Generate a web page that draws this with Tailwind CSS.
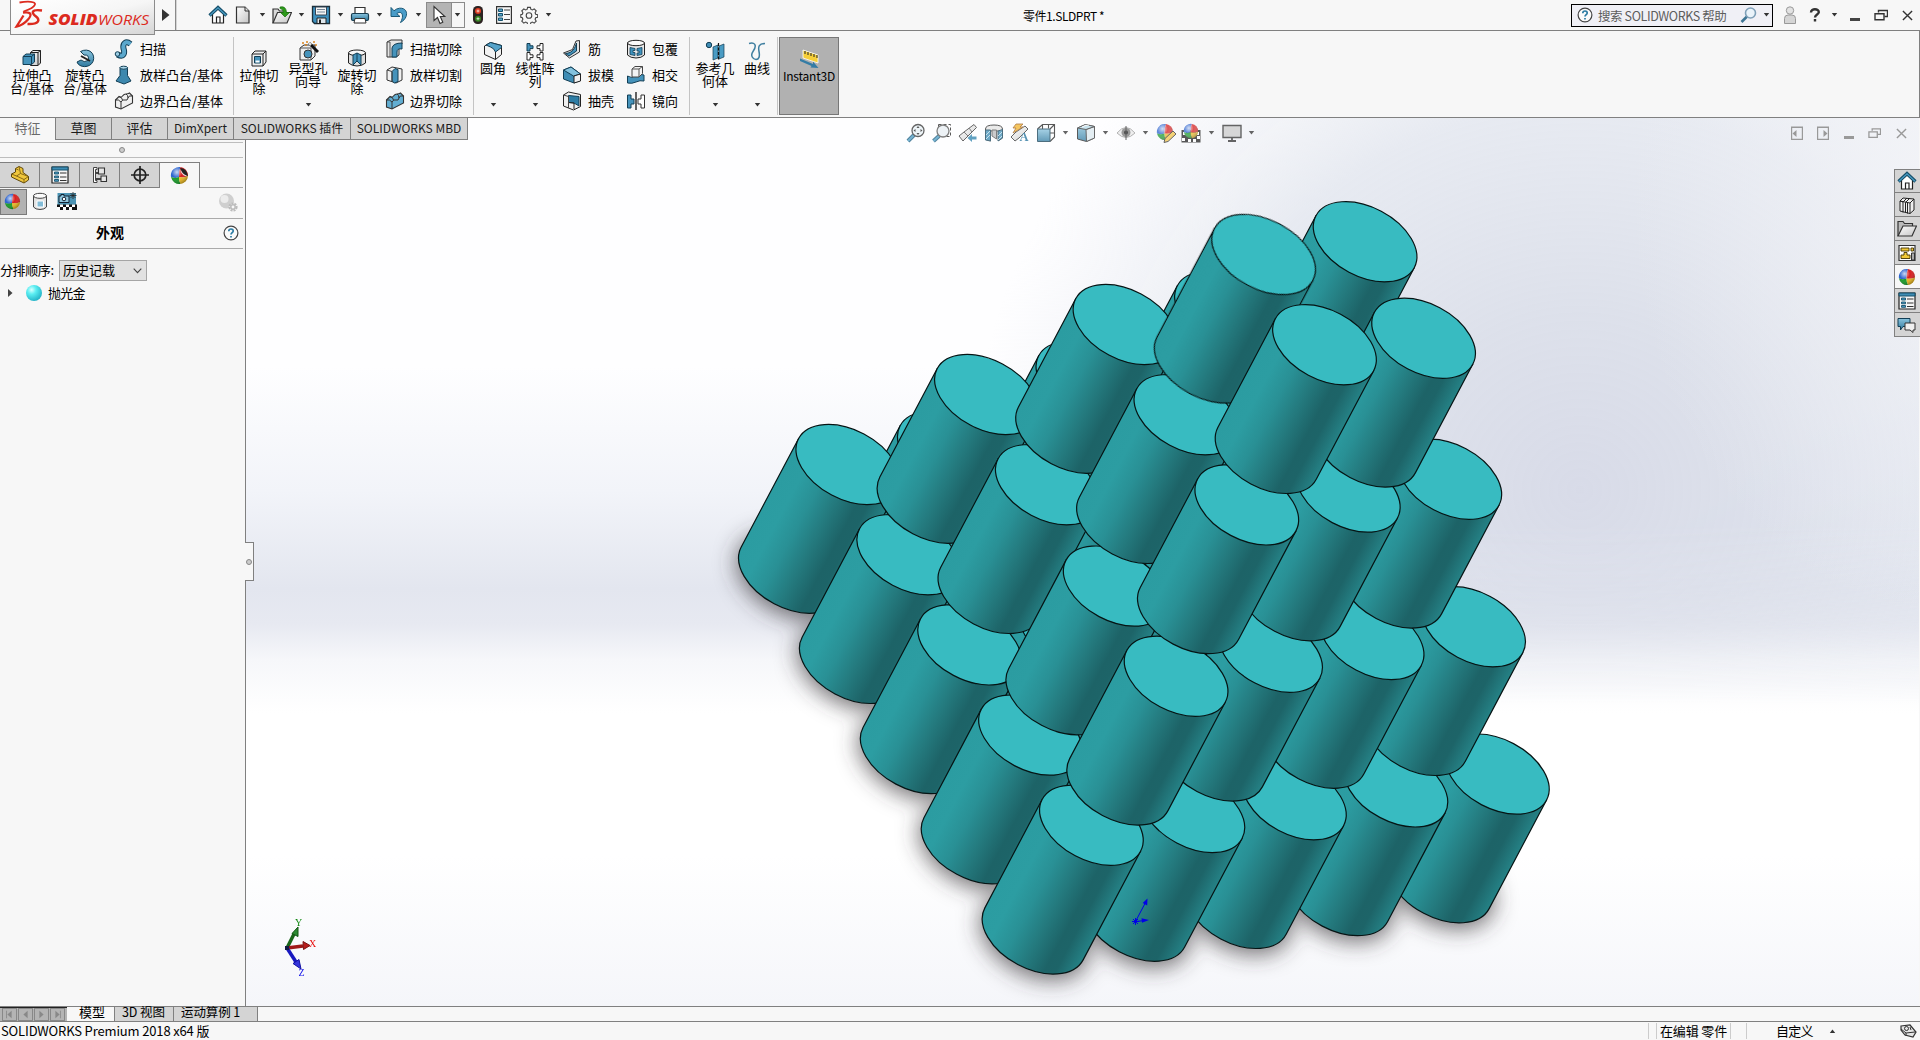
<!DOCTYPE html>
<html lang="zh-CN">
<head>
<meta charset="utf-8">
<title>零件1.SLDPRT *</title>
<script src="https://cdn.jsdelivr.net/npm/@tailwindcss/browser@4"></script>
</head>
<body class="bg-[#f7f7f7]">
<svg class="absolute w-0 h-0" aria-hidden="true">
<defs>
<linearGradient id="blue" x1="0" y1="0" x2="0" y2="1"><stop offset="0" stop-color="#8ac4de"/><stop offset="1" stop-color="#2f7aa0"/></linearGradient>
<linearGradient id="gray" x1="0" y1="0" x2="1" y2="1"><stop offset="0" stop-color="#fff"/><stop offset="1" stop-color="#c4c4c4"/></linearGradient>
<radialGradient id="shine" cx=".35" cy=".3" r=".75"><stop offset="0" stop-color="#fff" stop-opacity=".75"/><stop offset=".45" stop-color="#fff" stop-opacity="0"/><stop offset="1" stop-color="#000" stop-opacity=".35"/></radialGradient>
<radialGradient id="cyanball" cx=".35" cy=".3" r=".8"><stop offset="0" stop-color="#d8ffff"/><stop offset=".35" stop-color="#5beef2"/><stop offset="1" stop-color="#1ba9c0"/></radialGradient>
<symbol id="caret" viewBox="0 0 7 4"><path d="M.8 0H6.2L3.5 3.4Z" fill="#333"/></symbol>
<symbol id="house" viewBox="0 0 20 20"><path d="M4.500 9v9h11V9L10 4Z" fill="#fff" stroke="#222" stroke-width="1.200"/><path d="M8.500 18v-6h3.500v6" fill="none" stroke="#222" stroke-width="1.200"/><path d="M1.500 10.500 10 2.500l8.500 8" fill="none" stroke="#17506b" stroke-width="3.200"/><path d="M2 10.200 10 2.800l8 7.400" fill="none" stroke="#4a9cc4" stroke-width="1.200"/></symbol>
<symbol id="ball" viewBox="0 0 18 18"><path d="M10 1A8 8 0 0 0 1 10.500Q5 12 8.500 10.500Q8.200 5 10 1Z" fill="#2a62cf"/><path d="M10 1a8 8 0 0 1 7 8.500Q13 11.500 8.500 10.500Q8.200 5 10 1Z" fill="#d81e1e"/><path d="M1 10.500A8 8 0 0 0 10 17Q8.500 14 8.500 10.500 5 12 1 10.500Z" fill="#159a26"/><path d="M10 17a8 8 0 0 0 7-7.500Q13 11.500 8.500 10.500 8.500 14 10 17Z" fill="#edb91d"/><circle cx="9" cy="9" r="8" fill="url(#shine)"/></symbol>
<symbol id="help" viewBox="0 0 16 16"><circle cx="8" cy="8" r="6.900" fill="#fafafa" stroke="#444" stroke-width="1.200"/><path d="M5.800 6.300C5.800 3.200 10.300 3.400 10.200 6 10.200 7.600 8 7.700 8 9.600M8 10.900v1.600" fill="none" stroke="#2b7ba3" stroke-width="1.700"/></symbol>
<symbol id="restore" viewBox="0 0 14 12"><path d="M4.500 3.500V1.500h9v6h-3" fill="none" stroke="currentColor" stroke-width="1.400"/><path d="M1 4.700h9v6H1Z" fill="none" stroke="currentColor" stroke-width="1.400"/></symbol>
<symbol id="close" viewBox="0 0 12 12"><path d="m1 1 10 10M11 1 1 11" stroke="currentColor" stroke-width="1.500"/></symbol>
<symbol id="props" viewBox="0 0 18 18"><path d="M1 1h16v16H1Z" fill="#f6f6f6" stroke="#222" stroke-width="1.200"/><path d="M1 1h16v3H1Z" fill="#3f8db5" stroke="#17506b"/><path d="M3.500 6h4v2h-4ZM3.500 10h4v1.800h-4ZM3.500 13.500h4v1.800h-4Z" fill="#4a9cc4" stroke="#17506b" stroke-width=".9"/><path d="M9 7h6.500M9 11h6.500M9 14.500h6.500" stroke="#333"/></symbol>
<symbol id="wave" viewBox="0 0 20 18"><path d="M1.500 8 5 4.500q2 1.500 3.500-.5T12 2t3.500-1l3 3v7L7 17l-5.500-2Z" stroke="#333" stroke-width="1.100"/><path d="M1.500 8q3-1 5.500 2 1.500-3 4-2t3-2 4.500-2M7 10v7M5 4.500Q8 5 8.500 8M12 2q2 1 2 4" fill="none" stroke="#333"/></symbol>
</defs>
</svg>

<div class="relative h-[1040px] w-[1920px] overflow-hidden bg-[#f7f7f7] font-['Noto_Sans_CJK_SC',sans-serif] text-[13px] leading-[13px] whitespace-nowrap text-black">
<!-- title bar -->
<header class="relative z-10 flex h-[31px] w-full items-center border-b border-[#808080]">
  <div class="ml-[10px] h-[35px] w-[145px] self-start border border-t-0 border-[#8c8c8c] bg-linear-to-br from-white via-[#f6f6f6] to-[#d5d5d5]">
    <svg class="h-[34px] w-[143px]" viewBox="0 0 143 34">
      <g fill="none" stroke="#dc2a1e"><path d="M8.500 2.500C17 1 25 1.500 24 4.500 23 7.500 17 10 12.500 11.500" stroke-width="1.800"/><path d="M12 12.500C20 11.500 21.500 14.500 17 19.500 13.500 23.500 9.500 26 5.500 26.500L12.500 15.500" stroke-width="2.300"/><path d="M31 10.500C19.500 9 20.500 13 25 16.500c4.500 3.500 3 8-8.500 7.500" stroke-width="2.500"/></g>
      <g fill="#dc2a1e" font-family="Open Sans" font-style="italic" font-size="15"><text x="37.500" y="24.500" font-weight="800" textLength="49" lengthAdjust="spacingAndGlyphs">SOLID</text><text x="87" y="24.500" textLength="51" lengthAdjust="spacingAndGlyphs">WORKS</text></g>
    </svg>
  </div>
  <svg class="ml-[7px] h-3 w-2" viewBox="0 0 8 12"><path d="M0 0 7.500 6 0 12Z" fill="#333"/></svg>
  <div class="ml-[5px] h-full w-[2px] border-l border-[#8a8a8a] bg-[#d4d4d4]"></div>
  <svg class="ml-[31px] size-5"><use href="#house"/></svg>
  <svg class="ml-[6px] h-5 w-[18px]" viewBox="0 0 18 20"><path d="M2.500 2h8.500l4 4v12h-12.500Z" fill="url(#gray)" stroke="#333" stroke-width="1.200"/><path d="M11 2v4h4" fill="#ddd" stroke="#333"/></svg>
  <svg class="ml-[7px] h-1 w-[7px]"><use href="#caret"/></svg>
  <svg class="ml-[6px] size-5" viewBox="0 0 20 20"><path d="M1 18V4h5l1.500 2H13v3" fill="#d8d8d8" stroke="#333" stroke-width="1.200"/><path d="M1 18 5.500 7.500H19.500L15 18Z" fill="url(#gray)" stroke="#333" stroke-width="1.200"/><path d="M8 2q6-1.500 6.500 5.500h3L13 12 8.500 7.500h2.800Q11.500 4 8 3.500Z" fill="#2d9a1b" stroke="#1a6d0d" stroke-width=".7"/></svg>
  <svg class="ml-[6px] h-1 w-[7px]"><use href="#caret"/></svg>
  <svg class="ml-[6px] size-5" viewBox="0 0 20 20"><path d="M1.500 1.500h17v17H3.500l-2-2Z" fill="#3d8fbd" stroke="#1c2f3a" stroke-width="1.300"/><path d="M4.500 2h11v8h-11Z" fill="#f5f5f5" stroke="#345"/><path d="M6 4.500h8M6 7h8" stroke="#789"/><path d="M6 13h9v5.500H6Z" fill="#dfe8ee" stroke="#222"/><path d="M8 14.500h2v4H8Z" fill="#222"/></svg>
  <svg class="ml-[6px] h-1 w-[7px]"><use href="#caret"/></svg>
  <svg class="ml-[6px] size-5" viewBox="0 0 20 20"><path d="M5 9V2.500h10V9" fill="#fff" stroke="#333" stroke-width="1.200"/><rect x="1.500" y="8.500" width="17" height="7" rx="1.500" fill="url(#blue)" stroke="#173e52" stroke-width="1.200"/><path d="M5 13.500h10l1 4.500H4Z" fill="#fff" stroke="#333"/></svg>
  <svg class="ml-[6px] h-1 w-[7px]"><use href="#caret"/></svg>
  <svg class="ml-[6px] size-5" viewBox="0 0 20 20"><path d="M2 2.500v9h9L7.800 8.700C12 5 16 9.500 11.500 17.500 20 13 19.500 2.500 10.500 3.200Q7.500 3.500 5 5.800Z" fill="#4a9cc8" stroke="#1b5876" stroke-width="1"/></svg>
  <svg class="ml-[6px] h-1 w-[7px]"><use href="#caret"/></svg>
  <div class="ml-[4px] flex h-[26px] w-[39px] items-center border border-[#8b8b8b]">
    <div class="flex h-full w-[25px] items-center justify-center border-r border-[#8b8b8b] bg-[#b4b4b4]"><svg class="h-5 w-4" viewBox="0 0 16 20"><path d="M3 1.500v14l3.500-3 2.500 6 2.800-1.200L9.300 11.500h4.500Z" fill="#fff" stroke="#333" stroke-width="1.100"/></svg></div>
    <svg class="ml-[2px] h-1 w-[7px]"><use href="#caret"/></svg>
  </div>
  <svg class="ml-[8px] h-[18px] w-[10px]" viewBox="0 0 10 18"><rect width="10" height="18" rx="4.500" fill="#2c2322"/><circle cx="5" cy="5" r="3" fill="#df3c22"/><circle cx="5" cy="12.700" r="3" fill="#368522"/><path d="M5 3.500v3M3.500 5h3M5 11.200v3M3.500 12.700h3" stroke="#fff" stroke-width=".7"/></svg>
  <svg class="ml-[13px] h-[18px] w-4" viewBox="0 0 16 18"><path d="M.6.600h14.800v16.800H.6Z" fill="#f8f8f8" stroke="#333" stroke-width="1.200"/><path d="M2.500 3h4v2.500h-4ZM2.500 7.500h4V10h-4ZM2.500 12h4v2.500h-4Z" fill="#56a5cc" stroke="#17506b"/><path d="M8 4h6M8 8.500h6M8 13.500h6" stroke="#444"/></svg>
  <svg class="ml-[8px] size-[18px]" viewBox="0 0 18 18"><path d="m7.600 1.400h2.800l.5 2 1.500.6 1.800-1.100 2 2-1.100 1.800.6 1.500 2 .5v2.600l-2 .5-.6 1.500 1.100 1.800-2 2-1.800-1.100-1.500.6-.5 2H7.600l-.5-2-1.500-.6-1.800 1.100-2-2 1.100-1.800-.6-1.500-1.500-.5V8.700l1.500-.5.600-1.500-1.100-1.800 2-2 1.800 1.100 1.500-.6Z" fill="#f8f8f8" stroke="#444" stroke-width="1.100"/><circle cx="9" cy="9.500" r="2.800" fill="none" stroke="#444" stroke-width="1.100"/></svg>
  <svg class="ml-[7px] h-1 w-[7px]"><use href="#caret"/></svg>
  <div class="ml-[471px] w-[90px] text-[12px] tracking-[-0.450px]">零件1.SLDPRT *</div>
  <div class="ml-auto flex h-[23px] w-[202px] items-center border border-black bg-[#f0f0f6]">
    <svg class="ml-[5px] size-4"><use href="#help"/></svg>
    <span class="ml-[5px] w-[132px] text-[12.500px] tracking-[-0.400px] text-[#5d5d5d]">搜索 SOLIDWORKS 帮助</span>
    <svg class="ml-[10px] h-4 w-[17px]" viewBox="0 0 17 16"><path d="M7 9.500 1.500 15" stroke="#3e7594" stroke-width="2.600"/><circle cx="10.500" cy="6" r="5" fill="#eaf3fa" stroke="#7fa0b8" stroke-width="1.600"/></svg>
    <svg class="ml-[6px] h-1 w-[7px]"><use href="#caret"/></svg>
  </div>
  <svg class="ml-[10px] h-[18px] w-[14px]" viewBox="0 0 14 18"><circle cx="7" cy="4.500" r="3.700" fill="#e2e2e2" stroke="#999"/><path d="M1.500 17.500v-5q0-3.500 3.500-3.500h4q3.500 0 3.500 3.500v5Z" fill="#d5d5d5" stroke="#999"/></svg>
  <svg class="ml-[12px] h-[14px] w-3" viewBox="0 0 12 14"><path d="M2 4.500C2 0 10 .5 9.800 4.200 9.700 6.500 6 6.500 6 9.500M6 11v2.500" fill="none" stroke="#333" stroke-width="2.400"/></svg>
  <svg class="ml-[10px] h-1 w-[7px]"><use href="#caret"/></svg>
  <div class="mt-[9px] ml-[12px] h-[3px] w-[10px] bg-[#444]"></div>
  <svg class="ml-[14px] h-3 w-[14px] text-[#333]"><use href="#restore"/></svg>
  <svg class="mr-[7px] ml-[14px] h-[11px] w-[11px] text-[#333]"><use href="#close"/></svg>
</header>

<!-- ribbon -->
<section class="flex h-[87px] w-full border-r border-b border-[#808080] text-center">
  <div class="ml-[6px] flex w-[52px] flex-col items-center pt-[17px]"><svg class="h-5 w-5" viewBox="0 0 20 20"><path d="M8.500 4.500 11 2.500h7.500V15l-2.500 2.500H8.500Z" fill="url(#gray)" stroke="#222"/><path d="M16 4.500v13M8.500 4.500H16l2.500-2" fill="none" stroke="#222"/><path d="m1 8.500 3-2.500h8.500V14l-3 2.500H1Z" fill="#4593bb" stroke="#123e55"/><path d="M1 8.500h8.500v8M9.500 8.500l3-2.500" fill="none" stroke="#123e55"/></svg><span>拉伸凸<br>台/基体</span></div>
  <div class="ml-px flex w-[52px] flex-col items-center pt-[17px]"><svg class="h-5 w-5" viewBox="0 0 20 20"><path d="M5.500 3.500C14-1 21 6 18 13.500 15 20.500 4 20 2 14L6 12q3 3 7 .500Q15 6.500 9 7Z" fill="url(#blue)" stroke="#123e55"/><path d="m6 8 9 5" stroke="#222" stroke-width="2"/></svg><span>旋转凸<br>台/基体</span></div>
  <div class="ml-[3px] flex w-[119px] flex-col gap-[6px] pt-[8px]">
    <div class="flex h-5 items-center gap-[6px]"><svg class="size-5" viewBox="0 0 20 20"><path d="M3.500 15.500C10 19 11 14 9.500 9.500 8.500 4 12 1.500 16.500 5" fill="none" stroke="#123e55" stroke-width="6"/><path d="M3.500 15.500C10 19 11 14 9.500 9.500 8.500 4 12 1.500 16.500 5" fill="none" stroke="#5ba8cd" stroke-width="4"/><circle cx="3.500" cy="15" r="2.300" fill="#9bcde3" stroke="#123e55"/></svg><span class="-mt-[2px]">扫描</span></div>
    <div class="flex h-5 items-center gap-[6px]"><svg class="size-5" viewBox="0 0 20 20"><path d="M6 2.500v8L2 16l8 3 7-3-3.500-5.500v-8Z" fill="#3d88ae" stroke="#123e55"/><ellipse cx="9.700" cy="2.700" rx="3.800" ry="1.500" fill="#a9d5e8" stroke="#123e55"/></svg><span class="-mt-[2px]">放样凸台/基体</span></div>
    <div class="flex h-5 items-center gap-[6px]"><svg class="h-[18px] w-5 fill-[#f0f0f0]"><use href="#wave"/></svg><span class="-mt-[2px]">边界凸台/基体</span></div>
  </div>
  <div class="mt-[6px] h-[78px] w-px bg-[#c4c4c4]"></div>
  <div class="ml-px flex w-[48px] flex-col items-center pt-[17px]"><svg class="h-5 w-5" viewBox="0 0 20 20"><path d="m3 6 3-3h11v11l-3 4H3Z" fill="#eee" stroke="#222"/><path d="M3 6h11v12M14 6l3-3" fill="none" stroke="#222"/><path d="M5.500 8.500h6v6.500h-6Z" fill="#4593bb" stroke="#123e55"/><path d="M6.500 12.500h4v2h-4Z" fill="#fff"/></svg><span>拉伸切<br>除</span></div>
  <div class="ml-px flex w-[48px] flex-col items-center pt-[10px]"><svg class="h-5 w-[22px]" viewBox="0 0 22 20"><path d="m3 7 4-3h11v11l-4 4H3Z" fill="#eee" stroke="#333"/><path d="M3 7h11v12" fill="none" stroke="#555"/><circle cx="11" cy="13" r="4" fill="#4593bb" stroke="#333"/><path d="m12 2 9 9" stroke="#111" stroke-width="3"/><path d="m12 2 2 2" stroke="#ddd" stroke-width="2.500"/><path d="M5 2h2M9 1h2M16 1h2M18 4h2M8 4h2" stroke="#d9831d" stroke-width="1.500"/></svg><span>异型孔<br>向导</span><svg class="mt-[16px] h-1 w-[7px]"><use href="#caret"/></svg></div>
  <div class="ml-px flex w-[48px] flex-col items-center pt-[17px]"><svg class="h-5 w-5" viewBox="0 0 20 20"><path d="M1.500 5v10q3.500 3 8.500 3t8.500-3V5Z" fill="#ddd" stroke="#222"/><ellipse cx="10" cy="4.800" rx="8.500" ry="2.800" fill="#f7f7f7" stroke="#222"/><path d="m6 7 4-2 4 2v10l-4-4-4 4Z" fill="#4593bb" stroke="#123e55"/><path d="M10 5v8" stroke="#123e55"/></svg><span>旋转切<br>除</span></div>
  <div class="ml-[4px] flex w-[88px] flex-col gap-[6px] pt-[8px]">
    <div class="flex h-5 items-center gap-[5px]"><svg class="size-5" viewBox="0 0 20 20"><path d="m2 3 4-2h11v4l-3 2v9l-3 2H2Z" fill="#e5e5e5" stroke="#333"/><path d="M7 18V9q1-5 10-5v6q-5-1-5 3v5Z" fill="#4593bb" stroke="#123e55"/><path d="M2 3h3v15" fill="none" stroke="#555"/></svg><span class="-mt-[2px]">扫描切除</span></div>
    <div class="flex h-5 items-center gap-[5px]"><svg class="size-5" viewBox="0 0 20 20"><path d="m2 5 5-3 10 2v11l-6 3-9-3Z" fill="#f0f0f0" stroke="#333"/><path d="M7 6.500 10 3.500l3 1v12L9.500 18 7 16Z" fill="#4593bb" stroke="#123e55"/><path d="M2 5l5 1.500V17" fill="none" stroke="#444"/></svg><span class="-mt-[2px]">放样切割</span></div>
    <div class="flex h-5 items-center gap-[5px]"><svg class="h-[18px] w-5 fill-[#62aed2]"><use href="#wave"/></svg><span class="-mt-[2px]">边界切除</span></div>
  </div>
  <div class="mt-[6px] h-[78px] w-px bg-[#c4c4c4]"></div>
  <div class="ml-[4px] flex w-[30px] flex-col items-center pt-[10px]"><svg class="h-5 w-5" viewBox="0 0 20 20"><path d="m1.500 5 6-3.500 11 3v9l-6 5-11-5Z" fill="#f2f2f2" stroke="#222"/><path d="M7.500 1.500 18.500 4.500v2L12.500 11Q11 7 7.500 6L3 4Z" fill="#55a3ca" stroke="#123e55"/><path d="M12.500 11v7.500" stroke="#222"/></svg><span>圆角</span><svg class="mt-[29px] h-1 w-[7px]"><use href="#caret"/></svg></div>
  <div class="ml-[6px] flex w-[42px] flex-col items-center pt-[10px]"><svg class="h-5 w-5" viewBox="0 0 20 20"><path d="M2 2.500h3v2.300h3v2.800H5V10H2Z" fill="#4593bb" stroke="#123e55"/><g fill="#fff" stroke="#222"><path d="M18 2.500h-3v2.300h-3v2.800h3V10h3ZM2 11.500h3v2.300h3v2.800H5V19H2ZM18 11.500h-3v2.300h-3v2.800h3V19h3Z"/></g></svg><span>线性阵<br>列</span><svg class="mt-[16px] h-1 w-[7px]"><use href="#caret"/></svg></div>
  <div class="ml-[6px] flex w-[64px] flex-col gap-[6px] pt-[8px]">
    <div class="flex h-5 items-center gap-[6px]"><svg class="size-5" viewBox="0 0 20 20"><path d="m1.500 14 9-3.500L14 2l3.500-.5v11.500l-10 6Z" fill="#e4e4e4" stroke="#333"/><path d="M3.500 14.500C11 14 13 9 14.500 4v8l-7.500 5Z" fill="#4593bb" stroke="#123e55"/></svg><span class="-mt-[2px]">筋</span></div>
    <div class="flex h-5 items-center gap-[6px]"><svg class="size-5" viewBox="0 0 20 20"><path d="M1.500 5 9 2l9.500 7v6.500L12 18 1.500 14Z" fill="#3f8db5" stroke="#123e55"/><path d="m1.500 5 10 6 7-2L9 2Z" fill="#83c2de" stroke="#123e55"/><path d="m12 11 6.500-2v7L12 18Z" fill="#f2f2f2" stroke="#222"/></svg><span class="-mt-[2px]">拔模</span></div>
    <div class="flex h-5 items-center gap-[6px]"><svg class="size-5" viewBox="0 0 20 20"><path d="m1.500 4 5-3 12 2.500v12l-7 3.500-10-4Z" fill="#f0f0f0" stroke="#222"/><path d="M6.500 4.500 17 5.500v9.500l-5-3-5.500-.5Z" fill="#2e7da5" stroke="#123e55"/><path d="m7 11.500 5 .500V18" fill="none" stroke="#222"/><path d="m1.500 4 5 1.500V17" fill="none" stroke="#444"/></svg><span class="-mt-[2px]">抽壳</span></div>
  </div>
  <div class="flex w-[63px] flex-col gap-[6px] pt-[8px]">
    <div class="flex h-5 items-center gap-[6px]"><svg class="size-5" viewBox="0 0 20 20"><path d="M1.500 4v12q3 3 8.500 3t8.500-3V4Z" fill="#e8e8e8" stroke="#222"/><ellipse cx="10" cy="4" rx="8.500" ry="2.700" fill="#fafafa" stroke="#222"/><path d="M4 8.500l5 1v2H7v2h2v3l-5-1ZM11 9.500l5-1v7l-5 1v-2.500h2v-2h-2Z" fill="#3f93be" stroke="#123e55" stroke-width=".8"/></svg><span class="-mt-[2px]">包覆</span></div>
    <div class="flex h-5 items-center gap-[6px]"><svg class="size-5" viewBox="0 0 20 20"><path d="M1.500 11q4 3 8 0t8.500-1v6q-4-1-8 1t-8.500 1Z" fill="#4593bb" stroke="#123e55"/><path d="m6 4 3-2.500h7.500v7L13 12H6Z" fill="#f4f4f4" stroke="#444"/><path d="M6 4h7v8M13 4l3.500-2.500" fill="none" stroke="#555"/></svg><span class="-mt-[2px]">相交</span></div>
    <div class="flex h-5 items-center gap-[6px]"><svg class="size-5" viewBox="0 0 20 20"><path d="M1.500 4h3.500v4h3v5H5v4H1.500Z" fill="#4593bb" stroke="#123e55"/><path d="M18.500 4H15v4h-3v5h3v4h3.500Z" fill="#fff" stroke="#333"/><path d="M10 1v18" stroke="#111" stroke-width="1.300"/></svg><span class="-mt-[2px]">镜向</span></div>
  </div>
  <div class="mt-[6px] h-[78px] w-px bg-[#c4c4c4]"></div>
  <div class="ml-[5px] flex w-[40px] flex-col items-center pt-[10px]"><svg class="h-5 w-5" viewBox="0 0 20 20"><circle cx="4" cy="4" r="2.700" fill="#3f8db5" stroke="#123e55"/><path d="m8 6 5-2v13l-5 2ZM14 5l5-2v13l-5 2Z" fill="#4a9cc4" stroke="#123e55" stroke-width=".7"/><path d="M13.500 2v17" stroke="#111" stroke-width="1.200" stroke-dasharray="3 1.500"/></svg><span>参考几<br>何体</span><svg class="mt-[16px] h-1 w-[7px]"><use href="#caret"/></svg></div>
  <div class="ml-[7px] flex w-[30px] flex-col items-center pt-[10px]"><svg class="h-5 w-5" viewBox="0 0 20 20"><path d="M2 2.500c8-2 7 4 4 8s0 8 3 8 4-3 3-8 0-8 6-8" fill="none" stroke="#3f7fa0" stroke-width="1.500"/></svg><span>曲线</span><svg class="mt-[29px] h-1 w-[7px]"><use href="#caret"/></svg></div>
  <div class="mt-[6px] ml-[5px] h-[78px] w-px bg-[#c4c4c4]"></div>
  <div class="mt-[6px] ml-px flex h-[78px] w-[60px] flex-col items-center border border-[#777] bg-[#b1b1b1] pt-[11px]"><svg class="h-5 w-5" viewBox="0 0 20 20"><path d="m4 1 15 5v8L4 9Z" fill="#f6cf38" stroke="#fff" stroke-width=".8"/><path d="M6 2v3M9 3v3M12 4v3M15 5v3M18 6v3" stroke="#222"/><path d="M1 9.500 14 15v-2.500l5.500 6.500-8-.5 1-1.500L1 12Z" fill="#347ca5"/></svg><span class="text-[12px] tracking-[-0.200px]">Instant3D</span></div>
</section>

<main class="relative flex h-[888px] w-full">
  <!-- model view -->
  <svg class="absolute inset-0 h-[888px] w-[1919px]" viewBox="0 118 1919 888">
    <defs>
      <linearGradient id="sky" x1="0" y1="118" x2="0" y2="1006" gradientUnits="userSpaceOnUse"><stop offset=".28" stop-color="#fefeff"/><stop offset=".42" stop-color="#f2f4f9"/><stop offset=".53" stop-color="#e3e6ef"/><stop offset=".57" stop-color="#e7e9f1"/><stop offset=".61" stop-color="#f6f7fa"/><stop offset=".67" stop-color="#fff"/><stop offset=".83" stop-color="#fff"/><stop offset="1" stop-color="#f5f6fa"/></linearGradient>
      <radialGradient id="haze" cx="0" cy="0" r="1" gradientTransform="translate(1580 490) scale(610 590)" gradientUnits="userSpaceOnUse"><stop offset="0" stop-color="#d8dbe8"/><stop offset=".3" stop-color="#dadee9" stop-opacity=".92"/><stop offset=".65" stop-color="#e1e5ee" stop-opacity=".8"/><stop offset=".82" stop-color="#e7eaf1" stop-opacity=".45"/><stop offset="1" stop-color="#ebedf3" stop-opacity="0"/></radialGradient>
      <linearGradient id="fade" x1="0" y1="118" x2="0" y2="1006" gradientUnits="userSpaceOnUse"><stop offset=".46" stop-color="#fff"/><stop offset=".56" stop-color="#999"/><stop offset=".66" stop-color="#000"/></linearGradient>
      <mask id="horizon" maskUnits="userSpaceOnUse" x="0" y="118" width="1920" height="888"><path d="M0 118h1920v888H0Z" fill="url(#fade)"/></mask>
      <radialGradient id="edge" cx="0" cy="0" r="1" gradientTransform="translate(1960 200) scale(330 420)" gradientUnits="userSpaceOnUse"><stop offset="0" stop-color="#f2f3f7"/><stop offset="1" stop-color="#eceef4" stop-opacity="0"/></radialGradient>
      <linearGradient id="side" x1="-55.600" x2="55.600" y1="0" y2="0" gradientUnits="userSpaceOnUse"><stop offset="0" stop-color="#2b9ca1"/><stop offset=".18" stop-color="#2c9da2"/><stop offset=".36" stop-color="#299095"/><stop offset=".55" stop-color="#247a7e"/><stop offset=".74" stop-color="#1d6367"/><stop offset=".83" stop-color="#1d6468"/><stop offset="1" stop-color="#258286"/></linearGradient>
      <filter id="soft" x="-20%" y="-20%" width="140%" height="140%"><feGaussianBlur stdDeviation="11"/></filter>
      <g id="cyl" transform="rotate(27.870)" stroke="#061414" stroke-width="1.200"><path d="M-55.600 0V122.800A55.600 34.700 0 0 0 55.600 122.800V0Z" fill="url(#side)"/><ellipse rx="55.600" ry="34.500" fill="#38bbc1"/></g>
      <ellipse id="shade" rx="58" ry="38" transform="translate(-57 112) rotate(27.870)"/>
    </defs>
    <path d="M0 118h1920v888H0Z" fill="url(#sky)"/>
    <path d="M0 118h1920v888H0Z" fill="url(#haze)" mask="url(#horizon)"/>
    <path d="M0 118h1920v888H0Z" fill="url(#edge)"/>
    <g id="shadows" filter="url(#soft)" fill="#403c3d" fill-opacity=".72"></g>
    <g id="stack"></g>
    <!-- sketch origin -->
    <g stroke="#0000e8" fill="#0000e8"><path d="m1135.500 921.500 10-19M1135.500 921.500l8-.8M1132 921.500h7M1135.500 918v7M1133 919l5 5M1138 919l-5 5" fill="none"/><path d="m1147.500 898.500-.3 7-4.500-2.500ZM1149 920l-7 2.800-.5-4.500Z" stroke="none"/></g>
    <!-- axis triad -->
    <g><path d="m287 948 7-14" stroke="#1a661a" stroke-width="3.500"/><path d="m298 927-6 6.500 6 3Z" fill="#2b8a32" stroke="#115511"/><path d="m287 948 16-2" stroke="#a01818" stroke-width="3.500"/><path d="m310 945.500-7-4 .5 8Z" fill="#b81c1c" stroke="#771111"/><path d="m287 948 9 14" stroke="#1818c0" stroke-width="3.500"/><path d="m301 969-8-5.500 6-4Z" fill="#3434dc" stroke="#1111a0"/><path d="M285 946h4v4h-4Z" fill="#111a44"/>
    <g font-family="Liberation Serif" font-size="10" text-anchor="middle"><text x="298.500" y="926" fill="#118811">Y</text><text x="312.500" y="947" fill="#e81010">X</text><text x="301.500" y="976" fill="#1010e8">Z</text></g></g>
  </svg>

  <!-- property manager -->
  <aside class="relative mt-[22px] flex h-[866px] w-[246px] flex-col border-r border-[#808080] bg-[#f7f7f7]">
    <div class="mt-[2px] flex h-[16px] w-[243px] items-center justify-center border-y border-[#bdbdbd]"><div class="size-[6px] rounded-full border border-[#888] bg-[#ccc]"></div></div>
    <div class="mt-[4px] flex h-[26px] w-[243px]">
      <div class="flex w-[40px] items-center justify-center border border-l-0 border-[#808080] bg-[#d4d4d4]"><svg class="size-5" viewBox="0 0 20 20"><path d="m1.500 9 4-2V3.500L9 1.500l4 2v4l5.500 4V15L14 18 1.500 12Z" fill="#f0c73d" stroke="#5e470c"/><path d="m1.500 9 5 2 4-2.500 8 3-4.500 3-7.500-3.500M9 1.500l1.500 7M14 14.500V18M5.500 3.500l3 1.500" fill="none" stroke="#7d6013" stroke-width=".9"/></svg></div>
      <div class="flex w-[40px] items-center justify-center border-y border-r border-[#808080] bg-[#d4d4d4]"><svg class="size-[18px]"><use href="#props"/></svg></div>
      <div class="flex w-[40px] items-center justify-center border-y border-r border-[#808080] bg-[#d4d4d4]"><svg class="size-[18px]" viewBox="0 0 18 18"><path d="M2.500 1.500H6v2H4.500v11H6v2H2.500Z" fill="#fff" stroke="#444"/><path d="M4.500 7h4M4.500 13h6" stroke="#444" stroke-width="2"/><path d="M7.500 2h6v6h-6ZM10 10h5.500v5.500H10Z" fill="#e6e6e6" stroke="#333" stroke-width="1.100"/></svg></div>
      <div class="flex w-[40px] items-center justify-center border-y border-r border-[#808080] bg-[#d4d4d4]"><svg class="size-[18px]" viewBox="0 0 18 18"><circle cx="9" cy="9" r="5.800" fill="none" stroke="#222" stroke-width="1.700"/><path d="M9 0v18M0 9h18" stroke="#222" stroke-width="1.700"/></svg></div>
      <div class="flex w-[40px] items-center justify-center border-t border-r border-[#808080]"><svg class="size-[19px]" viewBox="0 0 18 18"><use href="#ball"/><path d="M9.500 2q6 0 7.500 7-2.500 1.500-4.500-1T9.500 2Z" fill="#222"/><path d="M10 3q2 5 6 6-1.500 1.500-4-1T10 3Z" fill="#f2dada"/></svg></div>
      <div class="flex-1 border-b border-[#aaa]"></div>
    </div>
    <div class="flex h-[31px] w-[243px] items-start border-b border-[#aaa] pt-px">
      <div class="flex h-[26px] w-[27px] items-center justify-center border border-[#7a7a7a] bg-[#b2b2b2]"><svg class="-mt-[2px] -ml-[2px] size-[17px]"><use href="#ball"/></svg></div>
      <svg class="mt-[3px] ml-[5px] h-[19px] w-4" viewBox="0 0 16 19"><path d="M1.500 4v11q2 2.500 6.500 2.500t6.500-2.500V4Z" fill="#e3e3e3" stroke="#444"/><ellipse cx="8" cy="3.800" rx="6.500" ry="2.500" fill="#fafafa" stroke="#444"/><path d="M5 9h6.500v6H5Z" fill="#83bcd7" stroke="#fff"/></svg>
      <svg class="mt-[3px] ml-[9px] h-[18px] w-5" viewBox="0 0 20 18"><path d="M.5 1H19v14H.5Z" fill="#4d94b4"/><path d="M2 4h2V2.500h3V4h5v6.500H2Z" fill="#8fc5dc" stroke="#123"/><circle cx="7" cy="7" r="1.800" fill="#fff" stroke="#123"/><path d="M16 0v7M12.500 3.500h7M13.500 1l5 5M18.500 1l-5 5" stroke="#222" stroke-width=".8"/><path d="M0 12.500h20V18H0Z" fill="#111"/><path d="M3 12.500h3v2.500H3ZM9 12.500h3v2.500H9ZM15 12.500h3v2.500h-3ZM0 15h3v3H0ZM6 15h3v3H6ZM12 15h3v3h-3Z" fill="#fff"/></svg>
      <svg class="mt-[4px] mr-[5px] ml-auto h-[19px] w-5" viewBox="0 0 20 19"><circle cx="8.500" cy="8" r="7.500" fill="#cfcfcf"/><circle cx="6.500" cy="6" r="4" fill="#ececec"/><circle cx="15" cy="14" r="3.600" fill="#f7f7f7" stroke="#bbb" stroke-width="2" stroke-dasharray="2 1"/><circle cx="15" cy="14" r="2.200" fill="none" stroke="#bbb" stroke-width="1.500"/></svg>
    </div>
    <div class="flex h-[30px] w-[243px] items-center border-b border-[#aaa]"><span class="-mt-[3px] ml-[96px] text-[14px] font-bold">外观</span><svg class="-mt-px mr-[4px] ml-auto size-4"><use href="#help"/></svg></div>
    <div class="mt-[11px] flex h-[21px] items-center"><span class="-mt-[3px] w-[59px] tracking-[-0.400px]">分排顺序:</span><div class="flex h-[21px] w-[88px] items-center border border-[#a5a5a5] bg-[#e1e1e1] pl-[3px]"><span class="-mt-[3px]">历史记载</span><svg class="mr-[4px] ml-auto h-[6px] w-[9px]" viewBox="0 0 9 6"><path d="m.7.700 3.800 4 3.800-4" fill="none" stroke="#444" stroke-width="1.100"/></svg></div></div>
    <div class="mt-[2px] flex h-[20px] items-center"><svg class="ml-[8px] h-[8px] w-[5px]" viewBox="0 0 5 8"><path d="m0 0 4.500 4L0 8Z" fill="#444"/></svg><svg class="ml-[13px] size-4" viewBox="0 0 16 16"><circle cx="8" cy="8" r="8" fill="url(#cyanball)"/></svg><span class="-mt-[2px] ml-[6px] tracking-[-0.800px]">抛光金</span></div>
    <div class="absolute top-[402px] left-[245px] flex h-[39px] w-[9px] items-center justify-center border border-l-0 border-[#808080] bg-[#f7f7f7]"><div class="size-[6px] rounded-full border border-[#888] bg-[#ccc]"></div></div>
  </aside>

  <!-- command manager tabs -->
  <nav class="absolute top-0 left-0 flex h-[22px] w-[468px] border-b border-[#808080] bg-[#d4d4d4] text-center leading-[20px] text-[#1c1c1c]">
    <div class="-mb-px w-[56px] border-r border-[#808080] bg-[#f7f7f7] text-[#6a6a6a]">特征</div>
    <div class="w-[56px] border-r border-[#808080]">草图</div>
    <div class="w-[56px] border-r border-[#808080]">评估</div>
    <div class="w-[66px] border-r border-[#808080] text-[12px]">DimXpert</div>
    <div class="w-[117px] border-r border-[#808080] text-[12px]">SOLIDWORKS 插件</div>
    <div class="w-[117px] border-r border-[#808080] text-[12px]">SOLIDWORKS MBD</div>
  </nav>

  <!-- heads-up view toolbar -->
  <div class="relative mt-[5px] ml-[660px] flex h-5 items-center opacity-75">
    <svg class="size-5" viewBox="0 0 20 20"><path d="M8 12 2 18" stroke="#17597c" stroke-width="4"/><path d="M8 12 2 18" stroke="#4a9cc4" stroke-width="2"/><circle cx="12" cy="7.500" r="6" fill="#e8f1f6" stroke="#333" stroke-width="1.300"/><path d="m12 3 1.500 2h-3ZM12 12l1.500-2h-3ZM7.500 7.500l2-1.500v3ZM16.500 7.500l-2-1.500v3Z" fill="#222"/></svg>
    <svg class="ml-[6px] size-5" viewBox="0 0 20 20"><path d="M6.500 1.500h12v12h-12Z" fill="none" stroke="#222" stroke-dasharray="3 2"/><path d="M7 13 1.500 18" stroke="#17597c" stroke-width="4"/><path d="M7 13 1.500 18" stroke="#4a9cc4" stroke-width="2"/><circle cx="11" cy="8" r="6" fill="#e8eef4" stroke="#555" stroke-width="1.300"/></svg>
    <svg class="ml-[6px] size-5" viewBox="0 0 20 20"><path d="m1 13 5-4L16 1.500l2.500 3L9 14l-4 4Z" fill="url(#gray)" stroke="#333"/><path d="m6 9 4 4M11 5l3 4" stroke="#555"/><path d="M18.500 13.500v3H14V19l-4.500-4L14 11v2.500Z" fill="#2d82ad"/></svg>
    <svg class="ml-[6px] size-5" viewBox="0 0 20 20"><path d="M1.500 6q0-4 8.500-4t8.500 4v9l-4 2.500V8h-8v10l-5-2Z" fill="#e4e4e4" stroke="#222"/><path d="M1.500 7h5v11l-5-1ZM14 8l4.500-1.500V15L14 18Z" fill="#3f8db5" stroke="#123e55"/><path d="m2 12 4-4M2 16l4-4M14 13l4-4M14 17l4-4" stroke="#d7ecf5" stroke-width=".8"/><path d="M8 7h4.500v9L8 13Z" fill="#bbb" stroke="#555"/></svg>
    <svg class="ml-[6px] size-5" viewBox="0 0 20 20"><path d="m1 14 5-5 9-6 3 3-9 9-4 3Z" fill="url(#gray)" stroke="#333"/><path d="M6 1h7l-3 3h3L3 10l3-5H3Z" fill="#f3b42b" stroke="#94520b" stroke-width=".8"/><text x="9.500" y="18" font-family="Liberation Serif" font-weight="bold" font-size="12.500" fill="#1e6f9a">A</text></svg>
    <svg class="ml-[6px] size-5" viewBox="0 0 20 20"><path d="m1.500 6 5-4.500h12V14L14 18.500M6.500 1.500V6M14 6l4.500-4.500M12.500 1.500v4M14 10h4.500" fill="none" stroke="#222" stroke-width="1.100"/><path d="M1.500 6H14v12.500H1.500Z" fill="url(#blue)" stroke="#123e55"/></svg>
    <svg class="ml-[6px] h-1 w-[7px]"><use href="#caret"/></svg>
    <svg class="ml-[7px] size-5" viewBox="0 0 20 20"><path d="m1.500 5 8-3.500 9 2V15l-8 3.500-9-2.500Z" fill="url(#blue)" stroke="#222"/><path d="m10 6.500 8.500-3V15L10.500 18.500Z" fill="#dce9f0" stroke="#333"/><path d="m1.500 5 8.500 1.500 8.500-3-9-2Z" fill="#b7dbe9" stroke="#333"/><path d="M6 4q3-2 7-2" stroke="#fff" fill="none"/></svg>
    <svg class="ml-[6px] h-1 w-[7px]"><use href="#caret"/></svg>
    <svg class="ml-[7px] h-5 w-5" viewBox="0 0 20 20"><path d="M1 10q9-11 18 0-9 9-18 0Z" fill="#eaeaea" stroke="#999"/><circle cx="10" cy="9.500" r="4.500" fill="#777"/><circle cx="10" cy="9.500" r="2" fill="#111"/><path d="M10 3v14" stroke="#333"/></svg>
    <svg class="ml-[6px] h-1 w-[7px]"><use href="#caret"/></svg>
    <svg class="ml-[7px] size-5" viewBox="0 0 20 20"><use href="#ball" width="18" height="18"/><path d="m17 8 3 3-8 7.500-4 1 1-4Z" fill="#f3c64a" stroke="#333"/></svg>
    <svg class="ml-[5px] size-5" viewBox="0 0 20 20"><path d="M.5 7h19v12.500H.5Z" fill="#222"/><path d="M2 9h3v3H2ZM15 9h3v3h-3ZM1 15h3v3H1ZM7 16h3v3H7ZM12 16h3v3h-3ZM16 13h3v3h-3Z" fill="#fff"/><use href="#ball" x="2" width="16" height="16"/></svg>
    <svg class="ml-[7px] h-1 w-[7px]"><use href="#caret"/></svg>
    <svg class="ml-[7px] h-5 w-5" viewBox="0 0 20 20"><path d="M1 2.500h18v12H1Z" fill="#ccc" stroke="#333" stroke-width="1.400"/><path d="M10 14.500V18M6 18h8" stroke="#333" stroke-width="1.800"/></svg>
    <svg class="ml-[6px] h-1 w-[7px]"><use href="#caret"/></svg>
  </div>
  <div class="relative mt-[5px] mr-[13px] ml-auto flex h-5 items-center gap-[14px] text-[#999]">
    <svg class="h-[14px] w-3" viewBox="0 0 12 14"><path d="M.6 1h10.800v12.400H.6ZM.6 1.500h11" fill="none" stroke="#999" stroke-width="1.200"/><path d="M5.500 4v7L1.500 7.500Z" fill="#999"/></svg>
    <svg class="h-[14px] w-3" viewBox="0 0 12 14"><path d="M.6 1h10.800v12.400H.6ZM.6 1.500h11" fill="none" stroke="#999" stroke-width="1.200"/><path d="M6.500 4v7l4-3.500Z" fill="#999"/></svg>
    <div class="mt-[9px] ml-px h-[3px] w-[10px] bg-[#999]"></div>
    <svg class="h-3 w-[13px]"><use href="#restore"/></svg>
    <svg class="ml-px size-[11px]"><use href="#close"/></svg>
  </div>

  <!-- task pane -->
  <div class="absolute top-[51px] right-0 flex h-[168px] w-[26px] flex-col border-t border-l border-[#808080] bg-[#d4d4d4]">
    <div class="flex h-[23px] items-center border-b border-[#808080] pl-[2px]"><svg class="size-5"><use href="#house"/></svg></div>
    <div class="flex h-6 items-center border-b border-[#808080] pl-[3px]"><svg class="size-[18px]" viewBox="0 0 18 18"><path d="m2 5 3-3 11 1v11l-4 3.500-4-1L2 15Z" fill="#eee" stroke="#222"/><path d="m2 5 3 1v10.500M5 6l4-4M7.500 6.500v10M9.500 7v10.500M7.500 6.500l4-4M12 7l4-4M12 7v10.500M2 5l10 2" fill="none" stroke="#222"/></svg></div>
    <div class="flex h-6 items-center border-b border-[#808080] pl-[2px]"><svg class="h-[17px] w-5" viewBox="0 0 20 17"><path d="M1 16V1.500h5l1.500 2h8V7" fill="#bbb" stroke="#333" stroke-width="1.200"/><path d="M1 16 6 6h13.500L15 16Z" fill="url(#gray)" stroke="#333" stroke-width="1.200"/></svg></div>
    <div class="flex h-6 items-center border-b border-[#808080] pl-[3px]"><svg class="size-[18px]" viewBox="0 0 18 18"><path d="M1 1.500h16v15H1Z" fill="#fff" stroke="#333" stroke-width="1.200"/><path d="M3 4h8v3H3ZM13 4h2.500v3H13ZM6 8.500h3V11h3v3.500H3V11h3Z" fill="#f1c93a" stroke="#443300" stroke-width=".9"/><path d="M13.500 9h3v7h-3Z" fill="#aaa" stroke="#333"/></svg></div>
    <div class="flex h-6 items-center border-b border-[#808080] bg-[#f7f7f7] pl-[3px]"><svg class="size-[18px]"><use href="#ball"/></svg></div>
    <div class="flex h-6 items-center border-b border-[#808080] pl-[3px]"><svg class="size-[18px]"><use href="#props"/></svg></div>
    <div class="flex h-6 items-center border-b border-[#808080] pl-[2px]"><svg class="h-4 w-[19px]" viewBox="0 0 19 16"><path d="M1 1.500h12v8H6L3.500 13V9.500H1Z" fill="url(#blue)" stroke="#123e55"/><path d="M8 6h10v7h-2v2.500L13 13H8Z" fill="#f0f0f0" stroke="#333"/></svg></div>
  </div>
</main>

<!-- document tabs -->
<div class="flex h-4 w-full border-y border-[#808080] leading-[10px]">
  <div class="flex w-[67px] justify-between border-t border-[#222] bg-[#b4b4b4] px-[2px]">
    <svg class="h-[13px] w-[15px] border border-[#888]" viewBox="0 0 15 13"><path d="M4 2v9" stroke="#888"/><path d="M10 2v9L5 6.500Z" fill="#888"/></svg>
    <svg class="h-[13px] w-[15px] border border-[#888]" viewBox="0 0 15 13"><path d="M10 2v9L5 6.500Z" fill="#888"/></svg>
    <svg class="h-[13px] w-[15px] border border-[#888]" viewBox="0 0 15 13"><path d="M5 2v9l5-4.500Z" fill="#888"/></svg>
    <svg class="h-[13px] w-[15px] border border-[#888]" viewBox="0 0 15 13"><path d="M11 2v9" stroke="#888"/><path d="M5 2v9l5-4.500Z" fill="#888"/></svg>
  </div>
  <div class="w-[48px] border-r border-[#808080] pl-[12px]">模型</div>
  <div class="w-[59px] border-r border-[#808080] bg-[#d4d4d4] pl-[7px] text-[12.500px] tracking-[-0.100px]">3D 视图</div>
  <div class="w-[84px] border-r border-[#808080] bg-[#d4d4d4] pl-[7px] text-[12.500px] tracking-[-0.100px]">运动算例 1</div>
</div>

<!-- status bar -->
<footer class="flex h-[18px] w-full items-center">
  <span class="-mt-px ml-px w-[300px] tracking-[-0.150px]">SOLIDWORKS Premium 2018 x64 版</span>
  <div class="ml-auto h-4 w-[8px] border-l border-[#ccc]"></div>
  <div class="h-4 w-[74px] border-l border-[#ccc] pl-[3px] leading-[15px] tracking-[-0.150px]">在编辑 零件</div>
  <div class="h-4 w-[16px] border-l border-[#ccc]"></div>
  <div class="h-4 w-[83px] border-l border-[#ccc] pl-[29px] leading-[15px] tracking-[-0.800px]">自定义</div>
  <svg class="h-1 w-[7px] rotate-180"><use href="#caret"/></svg>
  <svg class="mr-[3px] ml-[64px] h-[14px] w-[17px]" viewBox="0 0 17 14"><path d="m1 2 9-1 6 7-3 5-8-2-4-5Z" fill="#e4e4e4" stroke="#333" stroke-width="1.200"/><path d="m1 5 5 4 9-1M6 9v3" fill="none" stroke="#333"/><circle cx="6.500" cy="4.500" r="2" fill="none" stroke="#333"/><path d="m10 3 1 3" stroke="#333"/></svg>
</footer>
</div>

<script>
// Square pyramid of cylinders: each level is one row and column smaller than the one below.
const NS = 'http://www.w3.org/2000/svg';
const stack = document.getElementById('stack');
const shadows = document.getElementById('shadows');
function put(parent, ref, x, y) {
  const el = document.createElementNS(NS, 'use');
  el.setAttribute('href', ref);
  el.setAttribute('x', x.toFixed(1));
  el.setAttribute('y', y.toFixed(1));
  parent.appendChild(el);
}
for (let level = 0; level < 4; level++) {
  const n = 5 - level;
  for (let r = 0; r < n; r++) {
    for (let c = n - 1; c >= 0; c--) {
      let x = 847.8 + 138.6 * level + 60.9 * r + 101.5 * c;
      let y = 464.5 - 70 * level + 90.2 * r - 12.8 * c;
      if (level === 1 && c === 0 && r >= 2) { x += 7; y += 11.2; }
      if (level === 3 && c === 1 && r === 1) { x -= 2.4; y += 6.4; }
      put(stack, '#cyl', x, y);
      if (level === 0) put(shadows, '#shade', x, y);
    }
  }
}
</script>
</body>
</html>
